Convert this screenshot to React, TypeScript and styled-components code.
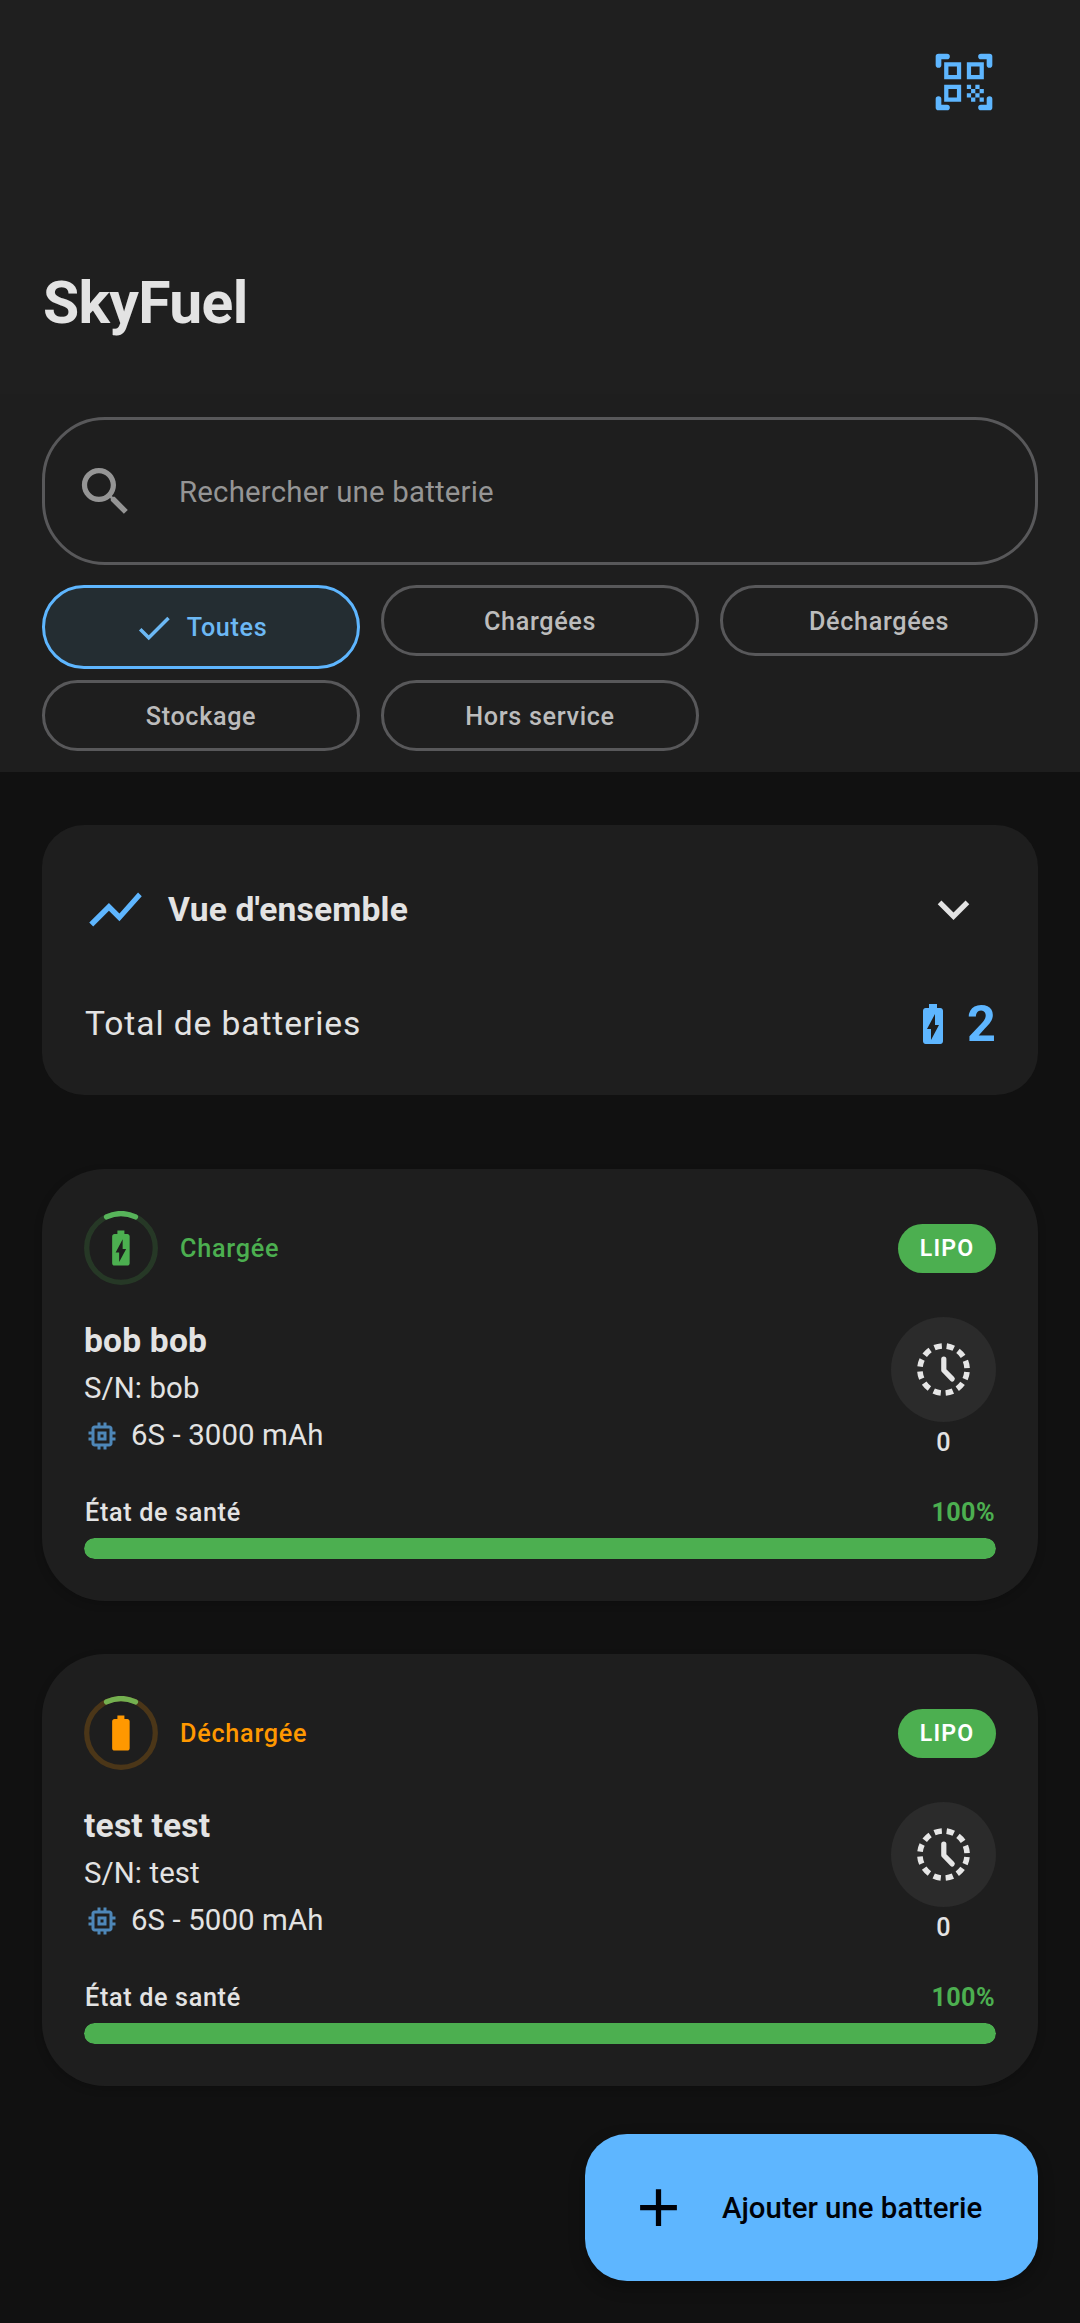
import React from "react";
import styled, { createGlobalStyle } from "styled-components";

const blue = "#5eb6ff";
const green = "#4caf50";
const orange = "#ff9800";
const text = "#e3e3e3";

const GlobalStyle = createGlobalStyle`
  *, *::before, *::after { box-sizing: border-box; }
  html, body { margin: 0; padding: 0; background: #111111; }
  body { font-family: Roboto, "Noto Sans", sans-serif; color: ${text}; }
  button { font: inherit; border: 0; background: none; padding: 0; margin: 0; cursor: pointer; }
  svg { display: block; flex: none; }
`;

const Screen = styled.div`
  position: relative;
  width: 1080px;
  height: 2323px;
  overflow: hidden;
  background: #111111;
`;

const Header = styled.header`
  display: flex;
  flex-direction: column;
  height: 394px;
  background: #1f1f1f;
`;

const Actions = styled.div`
  display: flex;
  align-items: center;
  justify-content: flex-end;
  height: 163px;
  padding-right: 82px;
`;

const Title = styled.h1`
  margin: 99px 0 0 43px;
  font-size: 58.8px;
  line-height: 81px;
  font-weight: 700;
  letter-spacing: -0.65px;
`;

const Filters = styled.section`
  display: flex;
  flex-direction: column;
  gap: 20px;
  height: 378px;
  padding: 23px 42px 0;
  background: #1e1e1e;
`;

const SearchField = styled.div`
  display: flex;
  align-items: center;
  gap: 42px;
  height: 148px;
  padding-left: 29px;
  border: 3px solid #58585a;
  border-radius: 63px;
  color: #959595;
`;

const Placeholder = styled.span`
  padding-top: 1px;
  font-size: 29.4px;
  line-height: 42px;
  letter-spacing: 0.2px;
`;

const ChipGrid = styled.div`
  display: grid;
  grid-template-columns: repeat(3, 1fr);
  grid-template-rows: 84px 71px;
  column-gap: 21px;
  row-gap: 11px;
  align-items: start;
`;

const Chip = styled.button<{ $selected?: boolean }>`
  display: flex;
  align-items: center;
  justify-content: center;
  gap: 12px;
  height: ${(p) => (p.$selected ? 84 : 71)}px;
  padding-top: ${(p) => (p.$selected ? 1 : 2)}px;
  padding-right: ${(p) => (p.$selected ? 2 : 0)}px;
  border: 3px solid ${(p) => (p.$selected ? blue : "#58585a")};
  border-radius: 42px;
  background: ${(p) => (p.$selected ? "#242d32" : "transparent")};
  color: ${(p) => (p.$selected ? "#6cb8f4" : "#bcbcbc")};
  font-size: 25.2px;
  line-height: 34px;
  font-weight: 500;
  letter-spacing: 0.66px;
`;

const List = styled.main`
  display: flex;
  flex-direction: column;
  padding: 53px 42px 0;
`;

const Overview = styled.section`
  display: flex;
  flex-direction: column;
  gap: 43px;
  height: 270px;
  margin-bottom: 74px;
  padding: 42px;
  border-radius: 42px;
  background: #1e1e1e;
`;

const OverviewHeader = styled.div`
  display: flex;
  align-items: center;
  height: 84px;
`;

const OverviewTitle = styled.h2`
  flex: 1;
  margin: 0 0 0 21px;
  padding-top: 2px;
  font-size: 33.6px;
  line-height: 46px;
  font-weight: 700;
  letter-spacing: 0.18px;
`;

const ExpandButton = styled.button`
  display: flex;
  align-items: center;
  justify-content: center;
  width: 84px;
  height: 84px;
  padding-right: 1px;
  color: ${text};
`;

const TotalRow = styled.div`
  display: flex;
  align-items: center;
  justify-content: space-between;
  height: 59px;
`;

const TotalLabel = styled.span`
  padding-left: 1px;
  font-size: 33.6px;
  line-height: 46px;
  letter-spacing: 0.9px;
`;

const TotalCount = styled.span`
  display: flex;
  align-items: center;
  gap: 10px;
  color: ${blue};
  font-size: 50.4px;
  line-height: 59px;
  font-weight: 700;
`;

const Card = styled.article`
  display: flex;
  flex-direction: column;
  height: 432px;
  margin-bottom: 53px;
  padding: 42px;
  border-radius: 63px;
  background: #1e1e1e;
  box-shadow: 0 3px 8px rgba(0, 0, 0, 0.18);
`;

const StatusRow = styled.div`
  display: flex;
  align-items: center;
  height: 74px;
`;

const StatusLabel = styled.span<{ $color: string }>`
  flex: 1;
  margin-left: 22px;
  padding-top: 2px;
  color: ${(p) => p.$color};
  font-size: 25.2px;
  line-height: 34px;
  font-weight: 500;
  letter-spacing: 0.75px;
`;

const TypeBadge = styled.span`
  display: flex;
  align-items: center;
  justify-content: center;
  width: 98px;
  height: 49px;
  padding-top: 1px;
  border-radius: 25px;
  background: ${green};
  color: #ffffff;
  font-size: 23.1px;
  line-height: 32px;
  font-weight: 600;
  letter-spacing: 1.15px;
`;

const DetailRow = styled.div`
  display: flex;
  justify-content: space-between;
  height: 143px;
  margin-top: 32px;
`;

const Identity = styled.div`
  display: flex;
  flex-direction: column;
`;

const Name = styled.h3`
  margin: 0;
  font-size: 33.6px;
  line-height: 48px;
  font-weight: 700;
  letter-spacing: 0.2px;
`;

const Meta = styled.span`
  display: flex;
  align-items: center;
  gap: 11px;
  font-size: 29.4px;
  line-height: 47px;
  letter-spacing: 0.1px;
`;

const Cycles = styled.div`
  display: flex;
  flex-direction: column;
  align-items: center;
  gap: 4px;
  font-size: 25.2px;
  line-height: 34px;
  font-weight: 500;
`;

const CycleDisc = styled.div`
  display: flex;
  flex: none;
  align-items: center;
  justify-content: center;
  width: 105px;
  height: 105px;
  border-radius: 50%;
  background: #2b2b2b;
`;

const HealthRow = styled.div`
  display: flex;
  justify-content: space-between;
  margin-top: 36px;
  padding: 0 1px 0 1px;
  font-size: 25.2px;
  line-height: 34px;
  font-weight: 500;
  letter-spacing: 0.66px;
`;

const HealthValue = styled.span`
  color: ${green};
  font-weight: 700;
  letter-spacing: 0.4px;
`;

const HealthTrack = styled.div`
  height: 21px;
  margin-top: 8px;
  border-radius: 11px;
  overflow: hidden;
  background: #2b2b2b;
`;

const HealthFill = styled.div`
  height: 100%;
  border-radius: 11px;
  background: ${green};
`;

const AddButton = styled.button`
  position: absolute;
  right: 42px;
  bottom: 42px;
  display: flex;
  align-items: center;
  gap: 32px;
  width: 453px;
  height: 147px;
  padding-left: 42px;
  border-radius: 42px;
  background: ${blue};
  box-shadow: 0 6px 16px rgba(0, 0, 0, 0.3);
  color: #000208;
  font-size: 29.4px;
  line-height: 42px;
  font-weight: 500;
`;

const PATHS = {
  search:
    "M15.5 14h-.79l-.28-.27C15.41 12.59 16 11.11 16 9.5 16 5.91 13.09 3 9.5 3S3 5.91 3 9.5 5.91 16 9.5 16c1.61 0 3.09-.59 4.23-1.57l.27.28v.79l5 4.99L20.49 19l-4.99-5zm-6 0C7.01 14 5 11.99 5 9.5S7.01 5 9.5 5 14 7.01 14 9.5 11.99 14 9.5 14z",
  check: "M9 16.17L4.83 12l-1.42 1.41L9 19 21 7l-1.41-1.41z",
  trend: "M3.5 18.49l6-6.01 4 4L22 6.92l-1.41-1.41-7.09 7.97-4-4L2 16.99z",
  expand: "M16.59 8.59L12 13.17 7.41 8.59 6 10l6 6 6-6z",
  charging:
    "M15.67 4H14V2h-4v2H8.33C7.6 4 7 4.6 7 5.33v15.33C7 21.4 7.6 22 8.33 22h7.33c.74 0 1.34-.6 1.34-1.33V5.33C17 4.6 16.4 4 15.67 4zM11 20v-5.5H9L13 7v5.5h2L11 20z",
  battery:
    "M15.67 4H14V2h-4v2H8.33C7.6 4 7 4.6 7 5.33v15.33C7 21.4 7.6 22 8.33 22h7.33c.74 0 1.34-.6 1.34-1.33V5.33C17 4.6 16.4 4 15.67 4z",
  memory:
    "M15 9H9v6h6V9zm-2 4h-2v-2h2v2zm8-2V9h-2V7c0-1.1-.9-2-2-2h-2V3h-2v2h-2V3H9v2H7c-1.1 0-2 .9-2 2v2H3v2h2v2H3v2h2v2c0 1.1.9 2 2 2h2v2h2v-2h2v2h2v-2h2c1.1 0 2-.9 2-2v-2h2v-2h-2v-2h2zm-4 6H7V7h10v10z",
  add: "M19 13h-6v6h-2v-6H5v-2h6V5h2v6h6v2z",
};

function Icon({ name, size, color = "currentColor" }: { name: keyof typeof PATHS; size: number; color?: string }) {
  return (
    <svg width={size} height={size} viewBox="0 0 24 24" fill={color} fillRule="evenodd" aria-hidden="true">
      <path d={PATHS[name]} />
    </svg>
  );
}

function ScannerIcon() {
  return (
    <svg width={68} height={68} viewBox="0 0 24 24" fill={blue} aria-hidden="true">
      <path
        d="M6 3H3v3M18 3h3v3M3 18v3h3M21 18v3h-3"
        fill="none"
        stroke={blue}
        strokeWidth={2}
        strokeLinecap="round"
        strokeLinejoin="round"
      />
      <path
        fillRule="evenodd"
        d="M5 5h6v6H5zM6.5 6.5v3h3v-3zM13 5h6v6h-6zM14.5 6.5v3h3v-3zM5 13h6v6H5zM6.5 14.5v3h3v-3z"
      />
      <path d="M13 13h1.5v1.5H13zM16 13h1.5v1.5H16zM14.5 14.5H16V16h-1.5zM17.5 14.5H19V16h-1.5zM13 16h1.5v1.5H13zM16 16h1.5v1.5H16zM14.5 17.5H16V19h-1.5zM17.5 17.5H19V19h-1.5z" />
    </svg>
  );
}

function StatusRing({ charged }: { charged: boolean }) {
  const color = charged ? green : orange;
  return (
    <svg width={74} height={74} viewBox="-37 -37 74 74" aria-hidden="true">
      <circle r={34.3} fill="none" stroke={color} strokeOpacity={charged ? 0.18 : 0.2} strokeWidth={5.25} />
      <path
        d="M-14.5 -31.1A34.3 34.3 0 0 1 14.5 -31.1"
        fill="none"
        stroke={charged ? "#57b45a" : "#74b050"}
        strokeWidth={5.25}
        strokeLinecap="round"
      />
      <g transform="translate(-21.1 -21) scale(1.75)">
        <path d={charged ? PATHS.charging : PATHS.battery} fill={color} fillRule="evenodd" />
      </g>
    </svg>
  );
}

function CycleClock() {
  const step = (2 * Math.PI * 23.6) / 12;
  return (
    <svg width={63} height={63} viewBox="-31.5 -31.5 63 63" fill="none" stroke="#e6e6e6" aria-hidden="true">
      <circle r={23.6} strokeWidth={5.6} strokeDasharray={`7.4 ${step - 7.4}`} transform="rotate(6)" />
      <path d="M.3 -10.4V.8L8.7 9.4" strokeWidth={5.2} strokeLinecap="round" strokeLinejoin="round" />
    </svg>
  );
}

type Battery = { name: string; serial: string; spec: string; charged: boolean; type: string; cycles: number; health: number };

const batteries: Battery[] = [
  { name: "bob bob", serial: "bob", spec: "6S - 3000 mAh", charged: true, type: "LIPO", cycles: 0, health: 100 },
  { name: "test test", serial: "test", spec: "6S - 5000 mAh", charged: false, type: "LIPO", cycles: 0, health: 100 },
];

function BatteryCard({ battery }: { battery: Battery }) {
  return (
    <Card>
      <StatusRow>
        <StatusRing charged={battery.charged} />
        <StatusLabel $color={battery.charged ? green : orange}>{battery.charged ? "Chargée" : "Déchargée"}</StatusLabel>
        <TypeBadge>{battery.type}</TypeBadge>
      </StatusRow>
      <DetailRow>
        <Identity>
          <Name>{battery.name}</Name>
          <Meta>S/N: {battery.serial}</Meta>
          <Meta>
            <Icon name="memory" size={36} color="#4e87b8" />
            {battery.spec}
          </Meta>
        </Identity>
        <Cycles>
          <CycleDisc>
            <CycleClock />
          </CycleDisc>
          {battery.cycles}
        </Cycles>
      </DetailRow>
      <HealthRow>
        <span>État de santé</span>
        <HealthValue>{battery.health}%</HealthValue>
      </HealthRow>
      <HealthTrack>
        <HealthFill style={{ width: `${battery.health}%` }} />
      </HealthTrack>
    </Card>
  );
}

export default function App() {
  return (
    <Screen>
      <GlobalStyle />
      <Header>
        <Actions>
          <ScannerIcon />
        </Actions>
        <Title>SkyFuel</Title>
      </Header>
      <Filters>
        <SearchField>
          <Icon name="search" size={63} />
          <Placeholder>Rechercher une batterie</Placeholder>
        </SearchField>
        <ChipGrid>
          <Chip $selected>
            <Icon name="check" size={42} />
            Toutes
          </Chip>
          <Chip>Chargées</Chip>
          <Chip>Déchargées</Chip>
          <Chip>Stockage</Chip>
          <Chip>Hors service</Chip>
        </ChipGrid>
      </Filters>
      <List>
        <Overview>
          <OverviewHeader>
            <Icon name="trend" size={63} color={blue} />
            <OverviewTitle>Vue d'ensemble</OverviewTitle>
            <ExpandButton>
              <Icon name="expand" size={63} />
            </ExpandButton>
          </OverviewHeader>
          <TotalRow>
            <TotalLabel>Total de batteries</TotalLabel>
            <TotalCount>
              <Icon name="charging" size={48} />
              {batteries.length}
            </TotalCount>
          </TotalRow>
        </Overview>
        {batteries.map((battery) => (
          <BatteryCard key={battery.name} battery={battery} />
        ))}
      </List>
      <AddButton>
        <Icon name="add" size={63} />
        Ajouter une batterie
      </AddButton>
    </Screen>
  );
}
